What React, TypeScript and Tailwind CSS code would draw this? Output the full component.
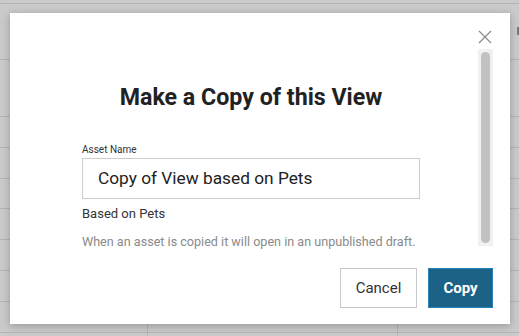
import React from "react";

const rows = [3, 59, 116, 147, 178, 208, 239, 270, 301, 332];

export default function App() {
  return (
    <div
      className="relative w-[519px] h-[336px] overflow-hidden bg-[#cacaca]"
      style={{ fontFamily: "Roboto, 'Liberation Sans', sans-serif" }}
    >
      {/* background page (greyed out) */}
      <div className="absolute inset-0">
        {rows.map((y) => (
          <div key={y} className="absolute left-0 right-0 h-px bg-[#b5b5b5]" style={{ top: y }} />
        ))}
        <div className="absolute left-[147px] top-[301px] bottom-0 w-px bg-[#b5b5b5]" />
        <div className="absolute left-[397px] top-[301px] bottom-0 w-px bg-[#b5b5b5]" />
        <div className="absolute left-[517px] top-[27px] w-[2px] h-[8px] bg-[#777]" />
      </div>

      {/* modal */}
      <div className="absolute left-[10px] top-[13px] w-[500px] h-[311px] bg-white shadow-[0_2px_8px_rgba(0,0,0,0.25)] flex flex-col">
        <button className="absolute right-[18px] top-[17px] w-[14px] h-[14px] text-[#8a8a8a]">
          <svg viewBox="0 0 14 14" width="14" height="14" fill="none" stroke="currentColor" strokeWidth="1.2">
            <path d="M1 1 L13 13 M13 1 L1 13" />
          </svg>
        </button>

        <div className="mt-[36px] h-[197px] flex">
          <div className="flex-1 pl-[72px]">
            <div className="w-[338px] flex flex-col">
              <h1 className="mt-[34px] text-center text-[23.2px] leading-[28px] font-bold text-[#222]">
                Make a Copy of this View
              </h1>
              <label className="mt-[33px] text-[10px] leading-[12px] text-[#333]">Asset Name</label>
              <div className="mt-[2px] h-[41px] border border-[#cccccc] flex items-center pl-[15px] text-[17.3px] text-[#222]">
                Copy of View based on Pets
              </div>
              <div className="mt-[7px] text-[13px] leading-[16px] text-[#333]">Based on Pets</div>
              <div className="mt-[12px] text-[12.6px] leading-[15px] text-[#8a8a8a] whitespace-nowrap">
                When an asset is copied it will open in an unpublished draft.
              </div>
            </div>
          </div>
          <div className="w-[15px] mr-[17px] bg-[#f1f1f1] p-[3px] flex">
            <div className="flex-1 rounded-full bg-[#c1c1c1]" />
          </div>
        </div>

        <div className="mt-[22px] flex justify-end gap-[11px] pr-[17px]">
          <button className="w-[77px] h-[40px] border border-[#c8c8c8] bg-white text-[15px] text-[#333]">
            Cancel
          </button>
          <button className="w-[65px] h-[40px] border border-[#2a7fb5] bg-[#1c6186] text-[15px] font-bold text-white">
            Copy
          </button>
        </div>
      </div>
    </div>
  );
}
